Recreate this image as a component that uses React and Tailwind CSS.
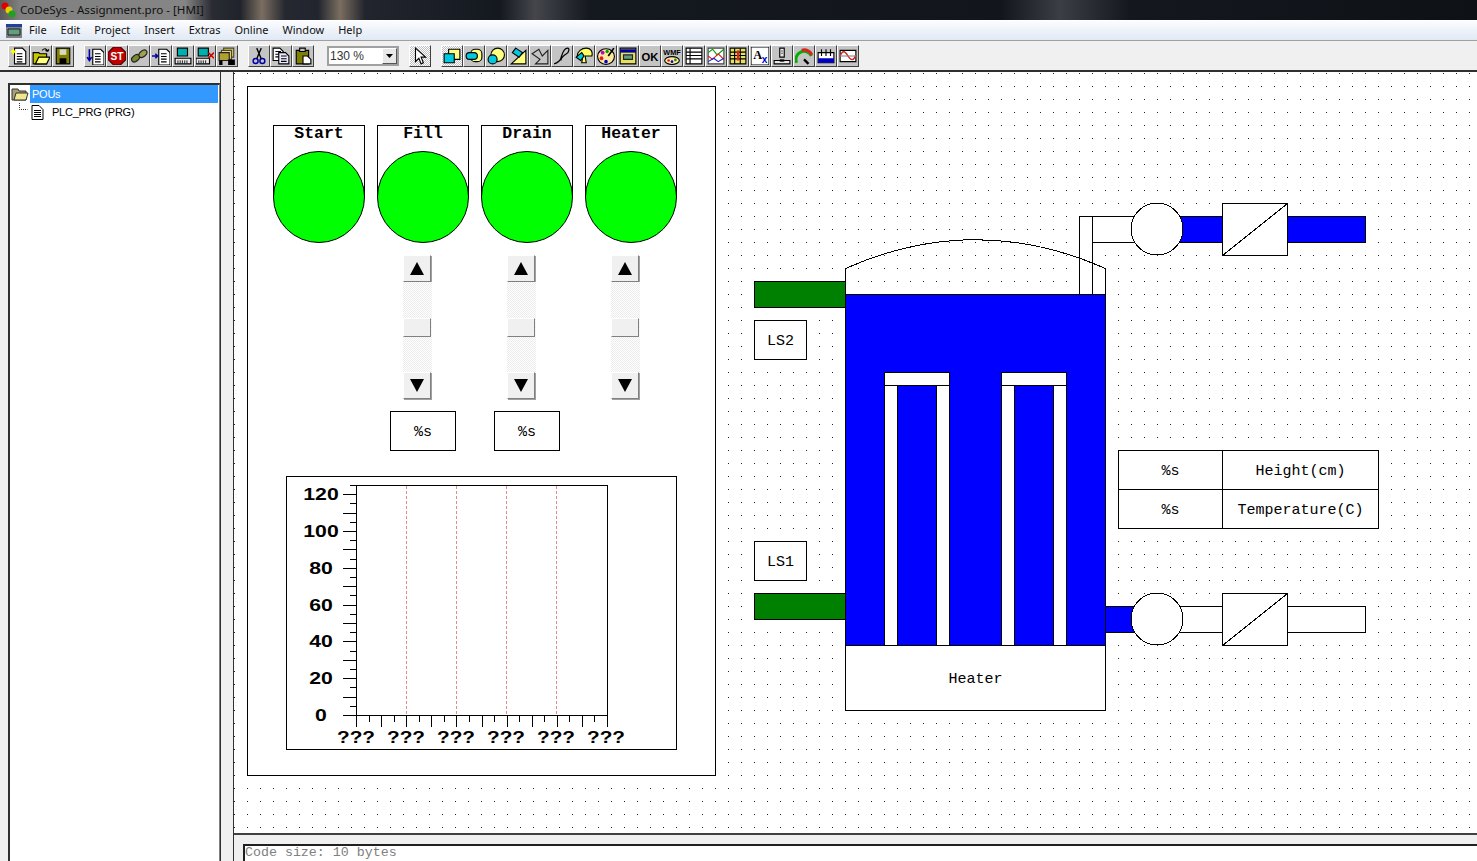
import React from 'react';

const menuItems = ['File', 'Edit', 'Project', 'Insert', 'Extras', 'Online', 'Window', 'Help'];
const lamps = [
  { label: 'Start' },
  { label: 'Fill', scroll: true, value: true },
  { label: 'Drain', scroll: true, value: true },
  { label: 'Heater', scroll: true },
];

const Page = ({ x = 3, y = 1, w = 10, h = 14, fill = '#fff' }) => (
  <path d={`M${x} ${y}h${w - 3}l3 3v${h - 3}h-${w}z`} fill={fill} stroke="#000" />
);
const Rows = ({ x, y, w, n = 4 }) => (
  <path d={Array.from({ length: n }, (_, i) => `M${x} ${y + i * 2.4}h${w}`).join('')} stroke="#000" />
);

const fileTools = [
  <><Page x={4} /><Rows x={6} y={6} w={5} /><path d="M3 1l1 2 2 1-2 1-1 2-1-2-2-1 2-1z" fill="#ff0" /></>,
  <><path d="M1 5h5l1 1h6v9H1z" fill="#c8c800" stroke="#000" /><path d="M3 15l3-6h10l-3 6z" fill="#ffff80" stroke="#000" /><path d="M9 3c2-2 4-2 5 1m0 0l1-2m-1 2l-2-1" fill="none" stroke="#000" /></>,
  <><path d="M2 1h12v14H2z" fill="#808000" stroke="#000" /><path d="M5 2h6v5H5z" fill="#d8d8c0" /><path d="M5 10h6v5H5z" fill="#000" /></>,
];

const plcTools = [
  <><Page x={6} y={2} /><Rows x={8} y={6} w={5} /><path d="M3 2v10m-2-3l2 3 2-3" fill="none" stroke="#00a" strokeWidth="1.4" /></>,
  <><path d="M5 0h6l5 5v6l-5 5H5l-5-5V5z" fill="#c00000" stroke="#400" /><text x="8" y="11.5" textAnchor="middle" fontSize="9" fontFamily="Liberation Sans" fontWeight="700" fill="#fff">ST</text></>,
  <><ellipse cx="5" cy="10" rx="4" ry="2.6" transform="rotate(-40 5 10)" fill="#7a8a30" stroke="#222" /><ellipse cx="11.5" cy="6" rx="4" ry="2.6" transform="rotate(-40 11.5 6)" fill="#a0a050" stroke="#222" /></>,
  <><Page x={6} y={2} /><Rows x={8} y={6} w={5} /><path d="M0 8h5m-2-2l2 2-2 2" fill="none" stroke="#00a" strokeWidth="1.4" /></>,
  <><path d="M3 1h9v7H3z" fill="#00b0b0" stroke="#000" /><path d="M1 10h14v5H1z" fill="#e8e8e8" stroke="#000" /><path d="M3 12.500h10M3 14h10" stroke="#000" strokeDasharray="1 1" /></>,
  <><path d="M2 1h9v7H2z" fill="#00b0b0" stroke="#000" /><path d="M0 10h12v5H0z" fill="#e8e8e8" stroke="#000" /><path d="M2 12.500h8M2 14h8" stroke="#000" strokeDasharray="1 1" /><path d="M11 5l5 5m0-5l-5 5" stroke="#c00" strokeWidth="1.3" /></>,
  <><path d="M5 1h9v8H5z" fill="#d8c850" stroke="#444" /><path d="M3 3h9v8H3z" fill="#e8d860" stroke="#444" /><path d="M1 5h9v7H1z" fill="#b0a030" stroke="#222" /><path d="M1 12h3v4H1zM9 11h6v5H9z" fill="#000" /></>,
];

const editTools = [
  <><circle cx="5" cy="12.500" r="2.200" fill="none" stroke="#00a" strokeWidth="1.300" /><circle cx="11" cy="12.500" r="2.200" fill="none" stroke="#00a" strokeWidth="1.300" /><path d="M6 10.500L10 1M10 10.500L6 1" stroke="#000" strokeWidth="1.200" /></>,
  <><Page x={1} y={1} w={9} h={11} /><Rows x={3} y={4} w={5} n={3} /><Page x={6} y={5} w={9} h={10} fill="#e8e8ff" /><Rows x={8} y={8} w={5} n={3} /></>,
  <><path d="M2 3h11v12H2z" fill="#808000" stroke="#000" /><path d="M5 1h5v3H5z" fill="#c0c0c0" stroke="#000" /><Page x={8} y={8} w={7} h={7} /></>,
];

const Pointer = <path d="M4 1v12l3-3 2 5 2-1-2-5h4z" fill="#fff" stroke="#000" />;

const drawTools = [
  <><path d="M5 2h10v9H5z" fill="#ffff80" stroke="#000" /><path d="M1 6h9v8H1z" fill="#00c8e0" stroke="#000" /></>,
  <><rect x="5" y="2" width="10" height="11" rx="4" fill="#ffff80" stroke="#000" /><rect x="1" y="5" width="10" height="6" rx="3" fill="#00c8e0" stroke="#000" /></>,
  <><circle cx="9.500" cy="7" r="6" fill="#ffff80" stroke="#000" /><circle cx="5" cy="11" r="4" fill="#00c8e0" stroke="#000" /></>,
  <><path d="M15 3v12H2z" fill="#ffff80" stroke="#000" /><path d="M6 1l6 4-3 4-6-4z" fill="#00c8e0" stroke="#000" /></>,
  <path d="M1 6l6-4 3 6 5-5v12H4l4-4z" fill="none" stroke="#222" />,
  <path d="M1 15c3-1 5-2 6-5s2-9 6-9c2 0 1 4-1 5s-5 4-5 6" fill="none" stroke="#000" strokeWidth="1.100" />,
  <><path d="M2 8c0-4 4-7 8-7s6 3 5 7H9l1 6H6l1-6z" fill="#ffff60" stroke="#000" /><path d="M1 9l5-4 2 3-3 4z" fill="#00c8e0" stroke="#000" /></>,
  <><ellipse cx="8" cy="8.500" rx="7.500" ry="7" fill="#ffe8a0" stroke="#000" /><circle cx="5" cy="5" r="1.700" fill="#c000c0" /><circle cx="9" cy="4" r="1.500" fill="#00a000" /><circle cx="4" cy="10" r="1.700" fill="#e02020" /><circle cx="8" cy="13" r="1.600" fill="#0000d0" /><path d="M15 1l-5 7" stroke="#000" strokeWidth="1.500" /></>,
  <><path d="M1 1h14v14H1z" fill="#e8e060" stroke="#000" /><path d="M1 2h14v3H1z" fill="#0000a0" /><path d="M4 7h8v4H4z" fill="#60a080" stroke="#222" /></>,
  <text x="8" y="12" textAnchor="middle" fontSize="10" fontFamily="Liberation Sans" fontWeight="700" fill="#000">OK</text>,
  <><text x="8" y="7" textAnchor="middle" fontSize="6.500" fontFamily="Liberation Sans" fontWeight="700" fill="#000">WMF</text><ellipse cx="8" cy="12" rx="6.500" ry="3.500" fill="#ffe8a0" stroke="#000" /><circle cx="5" cy="12" r="1.200" fill="#e02020" /><circle cx="8" cy="13" r="1.200" fill="#0000d0" /><circle cx="11" cy="11.500" r="1.200" fill="#00a000" /></>,
  <><path d="M1 1h14v14H1z" fill="#fff" stroke="#000" /><path d="M1 4.500h14M1 7.500h14M1 10.500h14M4.500 1v14" stroke="#000" /></>,
  <><path d="M1 1h14v14H1z" fill="#fff" stroke="#444" /><path d="M1 5l4-3 4 5 6-5" fill="none" stroke="#00a000" /><path d="M1 8l4 3 5-5 5 5" fill="none" stroke="#e02020" /><path d="M1 13l5-3 4 3 5-3" fill="none" stroke="#2020d0" /></>,
  <><path d="M1 1h14v14H1z" fill="#e8e060" stroke="#000" /><path d="M1 4.500h14M1 7.500h14M1 10.500h14M5 1v14M10 1v14" stroke="#000" /><path d="M8 3v9" stroke="#e02020" strokeWidth="2" /></>,
  <><path d="M0 0h16v16H0z" fill="#fff" stroke="#000" /><text x="6" y="10.500" textAnchor="middle" fontSize="11" fontFamily="Liberation Serif" fontWeight="700" fill="#000">A</text><text x="12" y="14.500" textAnchor="middle" fontSize="9" fontFamily="Liberation Sans" fontWeight="700" fill="#0000d0">x</text></>,
  <><path d="M6 1h4v8H6z" fill="#e8e8e8" stroke="#000" /><path d="M8 3v3" stroke="#000" strokeDasharray="1 1" /><path d="M1 12h14v3H1z" fill="#e8e8e8" stroke="#000" /><path d="M6 11h4v2H6z" fill="#000" /></>,
  <><path d="M1.500 14A7 7 0 0 1 14.500 8" fill="none" stroke="#00b000" strokeWidth="2.600" /><path d="M6 3A7 7 0 0 1 15 7" fill="none" stroke="#e02020" strokeWidth="2.600" /><path d="M8 11l4 4" stroke="#000" strokeWidth="2" /></>,
  <><path d="M1 5h14v9H1z" fill="#fff" stroke="#000" /><path d="M1 10h14v4H1z" fill="#0000c0" /><path d="M4 2v6M8 2v6M12 2v6" stroke="#000" /></>,
  <><path d="M1 3h14v10H1z" fill="#fff" stroke="#000" /><path d="M1 8c2-5 4-5 7 0s5 4 7-1" fill="none" stroke="#d02020" strokeWidth="1.200" /><path d="M1 8h14" stroke="#888" /></>,
];

const Tool = ({ children, pressed }) => (
  <div
    className={`w-[22px] h-[22px] flex-none flex items-center justify-center border border-t-white border-l-white border-r-[#404040] border-b-[#404040] ${
      pressed
        ? 'bg-[conic-gradient(#c0c0c0_25%,#fff_0_50%,#c0c0c0_0_75%,#fff_0)] bg-[length:2px_2px]'
        : 'bg-[#c4c4c4]'
    }`}
  >
    <svg width="18" height="18" viewBox="0 0 16 16">{children}</svg>
  </div>
);

const ScrollButton = ({ down }) => (
  <div className="w-[28px] h-[27px] flex items-center justify-center bg-[#f0f0f0] border border-t-white border-l-white border-r-[#808080] border-b-[#808080] shadow-[1px_1px_0_#a0a0a0]">
    <svg width="14" height="13" viewBox="0 0 14 13">
      <path d={down ? 'M0 0h14L7 13z' : 'M7 0l7 13H0z'} fill="#000" />
    </svg>
  </div>
);

const Scrollbar = () => (
  <div className="w-[29px] ml-[26px] flex flex-col">
    <ScrollButton />
    <div className="h-[90px] flex flex-col justify-center bg-[conic-gradient(#ececec_25%,#fff_0_50%,#ececec_0_75%,#fff_0)] bg-[length:2px_2px]">
      <div className="w-[28px] h-[19px] bg-[#f0f0f0] border border-t-white border-l-white border-r-[#808080] border-b-[#808080]" />
    </div>
    <ScrollButton down />
  </div>
);

const ValueBox = () => (
  <div className="w-[66px] h-[40px] ml-[13px] pt-[4px] border border-black flex items-center justify-center text-[15px]">%s</div>
);

const chartText = { textAnchor: 'middle', fontWeight: 700, fontFamily: 'Liberation Sans', fill: '#000', lengthAdjust: 'spacingAndGlyphs' };

const Chart = () => (
  <div className="w-[391px] h-[274px] ml-[13px] mt-[25px] border border-black">
    <svg width="389" height="272" viewBox="287 477 389 272" className="block">
      <rect x="356.5" y="485.5" width="251" height="230" fill="#fff" stroke="#000" />
      {[406, 456, 506, 556].map((x) => (
        <line key={x} x1={x + 0.5} x2={x + 0.5} y1="486" y2="715" stroke="#e08c8c" strokeDasharray="3 2" />
      ))}
      {Array.from({ length: 26 }, (_, i) => {
        const y = Math.round(715 - i * 9.2) + 0.5;
        return <line key={i} x1={i % 2 ? 350 : 343} x2="357" y1={y} y2={y} stroke="#000" />;
      })}
      {Array.from({ length: 21 }, (_, i) => {
        const x = Math.round(356 + i * 12.55) + 0.5;
        return <line key={i} x1={x} x2={x} y1="716" y2={i % 2 ? 722 : 727} stroke="#000" />;
      })}
      {[0, 20, 40, 60, 80, 100, 120].map((v, i) => (
        <text key={v} {...chartText} x="321" y={721 - i * 36.8} fontSize="17" textLength={String(v).length * 11.8}>{v}</text>
      ))}
      {[356, 406, 456, 506, 556, 606].map((x) => (
        <text key={x} {...chartText} x={x} y="743" fontSize="17" textLength="38">???</text>
      ))}
    </svg>
  </div>
);

const Pump = ({ cy }) => <circle cx="1157" cy={cy} r="26" fill="#fff" stroke="#000" />;
const Valve = ({ y }) => (
  <>
    <rect x="1222.5" y={y + 0.5} width="65" height="52" fill="#fff" stroke="#000" />
    <line x1="1222.5" y1={y + 52.5} x2="1287.5" y2={y + 0.5} stroke="#000" />
  </>
);

const TankDrawing = () => (
  <svg width="1243" height="761" viewBox="234 72 1243 761" shapeRendering="crispEdges" className="absolute left-0 top-0 pointer-events-none">
    {/* level switches */}
    <rect x="754.5" y="281.5" width="91" height="26" fill="#008000" stroke="#000" />
    <rect x="754.5" y="593.5" width="91" height="26" fill="#008000" stroke="#000" />
    {/* fill pipe */}
    <rect x="1079.5" y="216.5" width="13" height="78" fill="#fff" stroke="#000" />
    <rect x="1092.5" y="216.5" width="50" height="26" fill="#fff" stroke="#000" />
    <rect x="1170.5" y="216.5" width="60" height="26" fill="#0000ff" stroke="#000" />
    <rect x="1280.5" y="216.5" width="85" height="26" fill="#0000ff" stroke="#000" />
    <Pump cy={229} />
    <Valve y={203} />
    {/* drain pipe */}
    <rect x="1105.5" y="606.5" width="40" height="26" fill="#0000ff" stroke="#000" />
    <rect x="1170.5" y="606.5" width="60" height="26" fill="#fff" stroke="#000" />
    <rect x="1280.5" y="606.5" width="85" height="26" fill="#fff" stroke="#000" />
    <Pump cy={619} />
    <Valve y={593} />
    {/* tank */}
    <rect x="845.5" y="294.5" width="260" height="351" fill="#0000ff" stroke="#000" />
    <path d="M845.5 294V268.500Q975.500 211 1105.500 268.500V294" fill="none" stroke="#000" />
    {[884, 1001].map((x) => (
      <g key={x}>
        <rect x={x + 0.5} y="372.5" width="65" height="13" fill="#fff" stroke="#000" />
        <rect x={x + 0.5} y="385.5" width="13" height="260" fill="#fff" stroke="#000" />
        <rect x={x + 52.5} y="385.5" width="13" height="260" fill="#fff" stroke="#000" />
      </g>
    ))}
  </svg>
);

export default function App() {
  return (
    <div className="w-[1477px] h-[861px] overflow-hidden flex flex-col bg-[#f0f0f0] text-black font-['Liberation_Sans',sans-serif]">
      {/* Title bar */}
      <div className="h-[20px] flex-none flex items-center bg-[linear-gradient(90deg,#5a5a5a_0,#808080_20px,#858585_185px,#2a2c33_212px,#20232b_240px,#7a6e60_262px,#262830_285px,#22252e_318px,#7a6e60_340px,#22252e_365px,#14181f_500px,#44464c_535px,#14181f_590px,#12151c_1000px,#3c3e45_1060px,#14171d_1130px,#0e1116_100%)]">
        <svg width="16" height="16" viewBox="0 0 16 16" className="ml-[1px] flex-none">
          <circle cx="4" cy="4" r="3.500" fill="#e00000" />
          <circle cx="8" cy="8" r="3.500" fill="#e8d000" />
          <circle cx="11" cy="12" r="3.500" fill="#20a020" />
        </svg>
        <span className="ml-[3px] text-[11.6px] text-[#111] font-['Noto_Sans',sans-serif]">CoDeSys - Assignment.pro - [HMI]</span>
      </div>

      {/* Menu bar */}
      <div className="h-[21px] flex-none flex items-center bg-[linear-gradient(180deg,#fbfcfe,#e0e9f4)] border-t border-white border-b border-b-[#a0a0a0]">
        <svg width="16" height="14" viewBox="0 0 16 14" className="ml-[6px] flex-none">
          <path d="M0 0h16v14H0z" fill="#808080" />
          <path d="M0 0h16v3H0z" fill="#2040a0" />
          <path d="M2 5h12v6H2z" fill="#60a080" stroke="#222" />
        </svg>
        <div className="ml-[7px] flex gap-[14px] text-[11px] text-[#111] font-['Noto_Sans',sans-serif]">
          {menuItems.map((item) => <span key={item}>{item}</span>)}
        </div>
      </div>

      {/* Toolbar */}
      <div className="h-[31px] flex-none flex items-center pl-[8px] bg-[#f0f0f0] border-b-2 border-[#303030]">
        <div className="flex">{fileTools.map((icon, i) => <Tool key={i}>{icon}</Tool>)}</div>
        <div className="flex ml-[10px]">{plcTools.map((icon, i) => <Tool key={i}>{icon}</Tool>)}</div>
        <div className="flex ml-[10px]">{editTools.map((icon, i) => <Tool key={i}>{icon}</Tool>)}</div>
        <div className="ml-[13px] w-[72px] h-[20px] flex items-center bg-white border-2 border-[#a0a0a0]">
          <span className="pl-[1px] flex-1 text-[12px] text-[#333]">130 %</span>
          <div className="w-[15px] h-[16px] flex items-center justify-center bg-[#e8e8e8] border border-t-white border-l-white border-r-[#555] border-b-[#555]">
            <svg width="7" height="4" viewBox="0 0 7 4"><path d="M0 0h7L3.500 4z" fill="#000" /></svg>
          </div>
        </div>
        <div className="ml-[10px]"><Tool pressed>{Pointer}</Tool></div>
        <div className="flex ml-[10px]">{drawTools.map((icon, i) => <Tool key={i} pressed={i === 0}>{icon}</Tool>)}</div>
      </div>

      {/* Main area */}
      <div className="flex-1 min-h-0 flex">
        {/* POU tree */}
        <div className="w-[221px] flex-none pl-[8px] pt-[11px] border-r border-[#303030]">
          <div className="h-full border-t-2 border-l-2 border-r border-t-[#303030] border-l-[#303030] border-r-[#808080] bg-white text-[11px] tracking-[-0.25px]">
            <div className="h-[18px] flex items-center">
              <svg width="18" height="14" viewBox="0 0 18 14" className="ml-[1px] flex-none">
                <path d="M1 2h6l1 2h7v9H1z" fill="#a8a070" stroke="#333" />
                <path d="M3 13l2-7h12l-2 7z" fill="#f0e890" stroke="#333" />
              </svg>
              <span className="ml-px flex-1 h-full flex items-center pl-[2px] mr-px bg-[#3399ff] text-white">POUs</span>
            </div>
            <div className="h-[18px] flex items-center">
              <svg width="21" height="18" viewBox="0 0 21 18" className="ml-[8px] flex-none">
                <path d="M1.500 0v6.500h8" fill="none" stroke="#333" strokeDasharray="1 1" />
              </svg>
              <svg width="13" height="15" viewBox="0 0 13 15" className="flex-none -ml-[8px]">
                <path d="M1 .5h7l4 4v10H1z" fill="#fff" stroke="#000" />
                <path d="M3 5.500h7M3 7.500h7M3 9.500h7M3 11.500h7" stroke="#000" />
              </svg>
              <span className="ml-[8px]">PLC_PRG (PRG)</span>
            </div>
          </div>
        </div>

        {/* Splitter */}
        <div className="w-[12px] flex-none bg-[#f0f0f0]" />

        {/* Editor */}
        <div className="flex-1 min-w-0 flex flex-col border-l border-[#303030]">
          <div className="relative h-[761px] flex-none pl-[13px] pt-[14px] bg-white bg-[conic-gradient(at_1px_1px,transparent_75%,#222_0)] bg-[length:13px_13px] bg-[position:0_1px] font-['Liberation_Mono',monospace]">
            {/* Control panel */}
            <div className="w-[469px] h-[690px] pl-[25px] pt-[38px] bg-white border border-black">
              <div className="grid grid-cols-[repeat(4,92px)] gap-x-[12px]">
                {lamps.map((lamp) => (
                  <div key={lamp.label} className="h-[118px]">
                    <div className="h-[72px] border border-b-0 border-black text-center text-[16.5px] font-bold leading-[15px]">{lamp.label}</div>
                    <div className="w-[92px] h-[92px] -mt-[46px] rounded-full bg-[#00ff00] border border-black" />
                  </div>
                ))}
                {lamps.map((lamp) => (
                  <div key={lamp.label} className="mt-[12px] h-[145px]">{lamp.scroll && <Scrollbar />}</div>
                ))}
                {lamps.map((lamp) => (
                  <div key={lamp.label} className="mt-[11px] h-[40px]">{lamp.value && <ValueBox />}</div>
                ))}
              </div>
              <Chart />
            </div>

            {/* Tank diagram */}
            <TankDrawing />
            <div className="absolute left-[520px] top-[248px] w-[53px] h-[40px] pt-[4px] bg-white border border-black flex items-center justify-center text-[15px]">LS2</div>
            <div className="absolute left-[520px] top-[469px] w-[53px] h-[40px] pt-[4px] bg-white border border-black flex items-center justify-center text-[15px]">LS1</div>
            <div className="absolute left-[611px] top-[573px] w-[261px] h-[66px] pt-[4px] bg-white border border-black flex items-center justify-center text-[15px]">Heater</div>
            <div className="absolute left-[884px] top-[378px] w-[261px] h-[79px] bg-white border border-black grid grid-cols-[104px_1fr] grid-rows-2 text-[15px]">
              <div className="pt-[4px] flex items-center justify-center border-r border-b border-black">%s</div>
              <div className="pt-[4px] flex items-center justify-center border-b border-black">Height(cm)</div>
              <div className="pt-[4px] flex items-center justify-center border-r border-black">%s</div>
              <div className="pt-[4px] flex items-center justify-center">Temperature(C)</div>
            </div>
          </div>

          {/* Message pane */}
          <div className="flex-1 min-h-0 pl-[9px] pt-[9px] bg-[#f0f0f0] border-t-2 border-[#404040]">
            <div className="h-full bg-white border-t-2 border-l-2 border-[#202020] text-[13.3px] leading-[14px] text-[#808080] font-['Liberation_Mono',monospace]">
              Code size: 10 bytes
            </div>
          </div>
        </div>
      </div>
    </div>
  );
}
